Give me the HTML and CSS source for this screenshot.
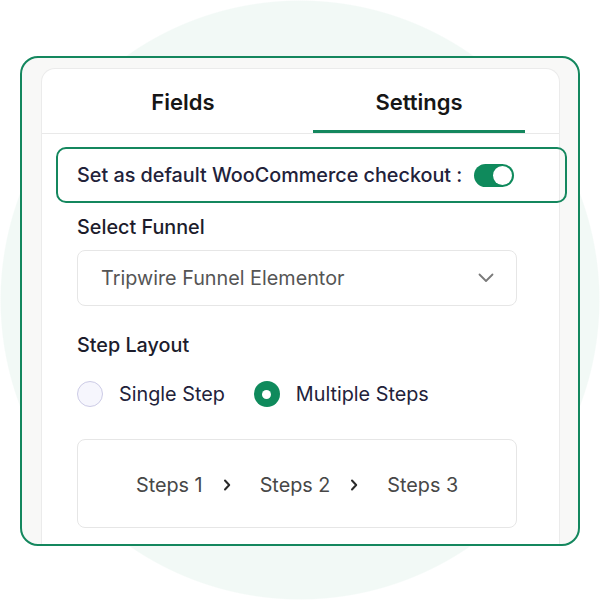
FILE: index.html
```html
<!DOCTYPE html>
<html>
<head>
<meta charset="utf-8">
<link rel="stylesheet" href="styles.css">
</head>
<body>
<div class="frame">
  <div class="card">
    <div class="tabs">
      <div class="tab">Fields</div>
      <div class="tab active">Settings</div>
    </div>
    <div class="content">
      <div class="default-box">
        <span class="default-text">Set as default WooCommerce checkout :</span>
        <span class="toggle"><span class="knob"></span></span>
      </div>
      <div class="label label-funnel">Select Funnel</div>
      <div class="select">
        <span class="select-text">Tripwire Funnel Elementor</span>
        <svg class="chev-down" width="16" height="10" viewBox="0 0 16 10"><path d="M1.5 1.5 L8 8 L14.5 1.5" fill="none" stroke="#7a7a7a" stroke-width="1.8" stroke-linecap="round" stroke-linejoin="round"/></svg>
      </div>
      <div class="label label-layout">Step Layout</div>
      <div class="radios">
        <span class="radio"></span>
        <span class="radio-label">Single Step</span>
        <span class="radio checked"><span class="dot"></span></span>
        <span class="radio-label">Multiple Steps</span>
      </div>
      <div class="steps">
        <span class="step">Steps 1</span>
        <svg class="chev" width="8" height="12" viewBox="0 0 8 12"><path d="M2 1.5 L6.2 6 L2 10.5" fill="none" stroke="#2a2a2a" stroke-width="2" stroke-linecap="round" stroke-linejoin="round"/></svg>
        <span class="step">Steps 2</span>
        <svg class="chev" width="8" height="12" viewBox="0 0 8 12"><path d="M2 1.5 L6.2 6 L2 10.5" fill="none" stroke="#2a2a2a" stroke-width="2" stroke-linecap="round" stroke-linejoin="round"/></svg>
        <span class="step">Steps 3</span>
      </div>
    </div>
  </div>
</div>
</body>
</html>
```
FILE: styles.css
```css
html, body {
  margin: 0;
  padding: 0;
}
body {
  width: 600px;
  height: 600px;
  overflow: hidden;
  font-family: Inter, "Liberation Sans", sans-serif;
  background: radial-gradient(circle 300px at 300px 300px, #f2f9f6 99.6%, #ffffff 100%);
  padding-top: 56px;
  box-sizing: border-box;
}
.frame {
  margin-left: 20px;
  width: 560px;
  height: 490px;
  box-sizing: border-box;
  border: 2px solid #14875e;
  border-radius: 18px;
  background: #f8f8f7;
  padding: 10px 18px 0 19px;
  overflow: hidden;
}
.card {
  background: #ffffff;
  border: 1px solid #ebebeb;
  border-bottom: none;
  border-radius: 14px 14px 0 0;
  height: 600px;
}
.tabs {
  display: flex;
  gap: 24px;
  padding: 0 34px 0 35px;
  height: 64px;
  border-bottom: 1px solid #e9e9e9;
}
.tab {
  flex: 1;
  text-align: center;
  font-size: 22px;
  font-weight: 600;
  color: #161616;
  line-height: 26px;
  padding-top: 20px;
  border-bottom: 3px solid transparent;
}
.tab.active {
  border-bottom-color: #14875e;
}
.content {
  padding: 13px 0 0 35px;
}
.default-box {
  display: flex;
  align-items: center;
  margin-left: -21px;
  margin-right: -8px;
  height: 56px;
  box-sizing: border-box;
  border: 2px solid #14875e;
  border-radius: 10px;
  padding-left: 19px;
  gap: 12px;
}
.default-text {
  font-size: 19.8px;
  font-weight: 500;
  color: #22223a;
  line-height: 24px;
}
.toggle {
  display: flex;
  align-items: center;
  justify-content: flex-end;
  width: 40px;
  height: 23px;
  box-sizing: border-box;
  padding-right: 2px;
  border-radius: 12px;
  background: #0f8a5c;
}
.knob {
  width: 19px;
  height: 19px;
  border-radius: 50%;
  background: #ffffff;
}
.label {
  font-size: 19.8px;
  font-weight: 500;
  color: #1c1c2c;
  line-height: 24px;
}
.label-funnel {
  margin-top: 12px;
}
.select {
  margin-top: 11px;
  width: 440px;
  height: 56px;
  box-sizing: border-box;
  border: 1px solid #e6e6e6;
  border-radius: 8px;
  display: flex;
  align-items: center;
  justify-content: space-between;
  padding: 0 22px 0 23px;
}
.select-text {
  font-size: 19.8px;
  color: #555555;
  line-height: 24px;
}
.label-layout {
  margin-top: 27px;
}
.radios {
  margin-top: 24px;
  display: flex;
  align-items: center;
  height: 26px;
}
.radio {
  width: 26px;
  height: 26px;
  box-sizing: border-box;
  border-radius: 50%;
  border: 1px solid #cccbe6;
  background: #f6f6fd;
  display: flex;
  align-items: center;
  justify-content: center;
}
.radio.checked {
  border: none;
  background: #0f8a5c;
  margin-left: 29px;
}
.dot {
  width: 9px;
  height: 9px;
  border-radius: 50%;
  background: #ffffff;
}
.radio-label {
  margin-left: 16px;
  font-size: 19.8px;
  color: #22223a;
  line-height: 24px;
}
.steps {
  margin-top: 32px;
  width: 440px;
  height: 89px;
  box-sizing: border-box;
  border: 1px solid #e6e6e6;
  border-radius: 8px;
  display: flex;
  align-items: center;
  padding-left: 58px;
  padding-top: 2px;
}
.step {
  font-size: 19.8px;
  color: #474747;
  line-height: 24px;
}
.chev {
  margin: 0 29px 0 20px;
}
```
